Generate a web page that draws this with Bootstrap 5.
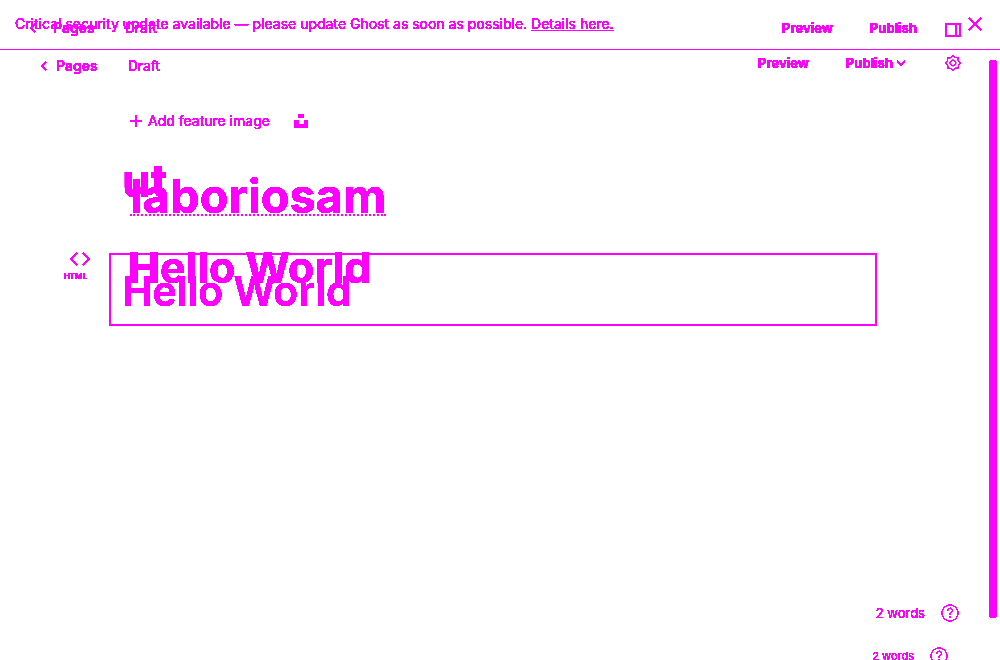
<!DOCTYPE html>
<html lang="en">
<head>
<meta charset="utf-8">
<meta name="viewport" content="width=device-width, initial-scale=1">
<title>Editor – revision overlay</title>
<link href="https://cdn.jsdelivr.net/npm/bootstrap@5.3.0/dist/css/bootstrap.min.css" rel="stylesheet">
<script src="https://cdn.jsdelivr.net/npm/bootstrap@5.3.0/dist/js/bootstrap.bundle.min.js" defer></script>
<style>
:root { --ink: #ff00ff; }
body { background: #fff; color: var(--ink); font-family: Inter, sans-serif; font-size: 14px; line-height: 20px; }
.overlay { height: 100vh; overflow: hidden; grid-template: 100vh / 100%; filter: url(#crisp); }
.revision { grid-area: 1 / 1; min-height: 0; }
.revision.newer { pointer-events: none; }
.revision.newer button, .revision.newer a { pointer-events: auto; }
.plain { background: none; border: 0; padding: 0; color: inherit; font-size: 14px; line-height: 20px; }
.plain svg, a svg { display: block; }
a, a:hover { color: inherit; }
svg { fill: none; stroke: currentColor; flex: none; }
.banner { height: 50px; border-bottom: 1px solid var(--ink); padding: 0 18px 2px 15px; }
.older .toolbar { height: 32px; padding: 0 39px 0 40px; }
.newer .toolbar { height: 56px; padding: 0 39px 0 29px; }
.strong-label { font-weight: 600; }
.draft-label { margin-left: 30px; }
.action { font-size: 13px; font-weight: 700; }
.publish { margin-left: 37px; }
.older .actions { height: 26px; }
.older .content { padding: 29px 112px 0 130px; }
.newer .content { padding: 100px 123px 0 122px; }
.headline { font-weight: 700; font-size: 47px; line-height: 36px; margin: 47px 0 0; }
.flagged { border-bottom: 2px dotted var(--ink); }
.older .hello { font-size: 43px; font-weight: 700; line-height: 44px; margin: 29px 0 0 -2px; }
.newer .headline { font-size: 46px; line-height: 48px; margin: 0; }
.html-block { border: 2px solid var(--ink); margin: 49px 0 0 -13px; padding: 11px; height: 73px; }
.newer .hello { font-size: 41px; line-height: 50px; font-weight: 600; margin: 0; }
.html-tag { position: absolute; right: 100%; top: -3px; margin-right: 20px; font-size: 8px; line-height: 12px; font-weight: 700; }
.older .status { padding: 0 41px 37px 0; font-size: 13px; }
.newer .status { padding: 0 52px 0 0; margin-bottom: -6px; font-size: 11px; }
.scroll-thumb { position: absolute; top: 60px; bottom: 42px; right: 3px; width: 8px; border-radius: 4px; background: var(--ink); }
</style>
</head>
<body>
<svg width="0" height="0" class="position-absolute" aria-hidden="true">
  <filter id="crisp" x="0" y="0" width="100%" height="100%" color-interpolation-filters="sRGB">
    <feComponentTransfer><feFuncA type="linear" slope="20" intercept="-2"/></feComponentTransfer>
  </filter>
</svg>
<main class="overlay d-grid position-relative">
  <section class="revision older d-flex flex-column">
    <div class="banner d-flex align-items-center justify-content-between">
      <span>Critical security update available — please update Ghost as soon as possible. <a href="#">Details here.</a></span>
      <button class="plain" aria-label="Close"><svg width="14" height="14" stroke-width="1.500"><path d="M1 1l12 12M13 1L1 13"/></svg></button>
    </div>
    <header class="toolbar d-flex align-items-center">
      <a href="#" class="d-flex align-items-center text-decoration-none gap-2 strong-label"><svg width="8" height="10" stroke-width="1.300"><path d="M6 1L2 5l4 4"/></svg>Pages</a>
      <span class="draft-label">Draft</span>
      <div class="actions d-flex align-items-center align-self-start ms-auto">
        <button class="plain action">Preview</button>
        <button class="plain action publish d-flex align-items-center gap-1">Publish <svg width="8" height="8" stroke-width="1.500"><path d="M0 2l4 4 4-4"/></svg></button>
        <button class="plain ms-4 ps-3" aria-label="Settings"><svg width="16" height="16" stroke-width="1" stroke-linejoin="round"><path d="M6.700 1.800Q8-.6 9.300 1.800Q9.900 2.900 11.200 2.600Q13.900 1.900 13.300 4.700Q13.100 6.100 14.200 6.700Q16.600 8 14.200 9.300Q13.100 9.900 13.400 11.200Q14.100 13.900 11.300 13.300Q9.900 13.100 9.300 14.200Q8 16.600 6.700 14.200Q6.100 13.100 4.800 13.400Q2.100 14.100 2.700 11.300Q2.900 9.900 1.800 9.300Q-.6 8 1.800 6.700Q2.900 6.100 2.600 4.800Q1.900 2.100 4.700 2.700Q6.100 2.900 6.700 1.800Z"/><circle cx="8" cy="8" r="2.800"/></svg></button>
      </div>
    </header>
    <div class="content">
      <div class="d-flex align-items-center gap-4">
        <button class="plain d-flex align-items-center"><svg class="me-1" width="14" height="12" stroke-width="2"><path d="M6 0v12M0 6h12"/></svg>Add feature image</button>
        <button class="plain" aria-label="Unsplash"><svg width="14" height="14"><path fill="currentColor" stroke="none" d="M4 0h6v4H4zM0 6h5v4h5V6h4v8H0z"/></svg></button>
      </div>
      <h1 class="headline d-flex"><span class="flagged">laboriosam</span></h1>
      <p class="hello">Hello World</p>
    </div>
    <footer class="status d-flex align-items-center justify-content-end gap-3 mt-auto">
      <span>2 words</span>
      <button class="plain" aria-label="Help"><svg width="18" height="18" stroke-width="1"><circle cx="9" cy="9" r="8"/><path d="M6.500 7c0-3.500 5-3.500 5-.5 0 2-2.500 1.500-2.500 4M9 12v1.500"/></svg></button>
    </footer>
  </section>

  <section class="revision newer d-flex flex-column">
    <header class="toolbar d-flex align-items-center">
      <a href="#" class="d-flex align-items-center text-decoration-none gap-3 strong-label"><svg width="8" height="10" stroke-width="1.300"><path d="M6 1L2 5l4 4"/></svg>Pages</a>
      <span class="draft-label">Draft</span>
      <button class="plain action ms-auto">Preview</button>
      <button class="plain action publish">Publish</button>
      <button class="plain ms-4 ps-1 pt-1" aria-label="Toggle sidebar"><svg width="16" height="14" stroke-width="2"><path d="M2 1h12a1 1 0 0 1 1 1v10a1 1 0 0 1-1 1H2a1 1 0 0 1-1-1V2a1 1 0 0 1 1-1zM11 1v12"/></svg></button>
    </header>
    <div class="content">
      <h1 class="headline">ut</h1>
      <div class="html-block position-relative">
        <div class="html-tag d-flex flex-column align-items-end gap-1"><svg width="21" height="14" stroke-width="1.500"><path d="M7 1L1 7l6 6M13 1l6 6-6 6"/></svg><span class="me-1">HTML</span></div>
        <h2 class="hello">Hello World</h2>
      </div>
    </div>
    <footer class="status d-flex align-items-center justify-content-end gap-3 mt-auto">
      <span>2 words</span>
      <button class="plain" aria-label="Help"><svg width="18" height="18" stroke-width="1"><circle cx="9" cy="9" r="8"/><path d="M6.500 7c0-3.500 5-3.500 5-.5 0 2-2.500 1.500-2.500 4M9 12v1.500"/></svg></button>
    </footer>
  </section>
  <div class="scroll-thumb"></div>
</main>
</body>
</html>
